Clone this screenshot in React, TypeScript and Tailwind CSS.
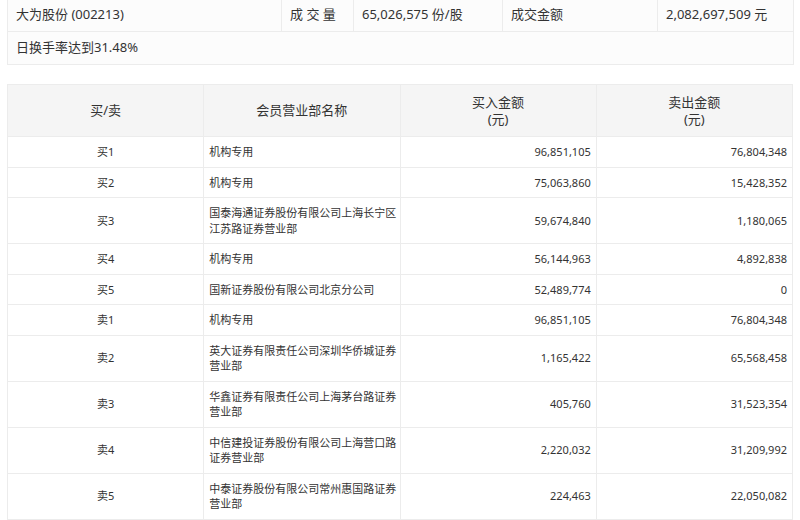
import React from 'react';

const rows = [
  { side: '买1', name: '机构专用', buy: '96,851,105', sell: '76,804,348' },
  { side: '买2', name: '机构专用', buy: '75,063,860', sell: '15,428,352' },
  { side: '买3', name: '国泰海通证券股份有限公司上海长宁区江苏路证券营业部', buy: '59,674,840', sell: '1,180,065' },
  { side: '买4', name: '机构专用', buy: '56,144,963', sell: '4,892,838' },
  { side: '买5', name: '国新证券股份有限公司北京分公司', buy: '52,489,774', sell: '0' },
  { side: '卖1', name: '机构专用', buy: '96,851,105', sell: '76,804,348' },
  { side: '卖2', name: '英大证券有限责任公司深圳华侨城证券营业部', buy: '1,165,422', sell: '65,568,458' },
  { side: '卖3', name: '华鑫证券有限责任公司上海茅台路证券营业部', buy: '405,760', sell: '31,523,354' },
  { side: '卖4', name: '中信建投证券股份有限公司上海营口路证券营业部', buy: '2,220,032', sell: '31,209,992' },
  { side: '卖5', name: '中泰证券股份有限公司常州惠国路证券营业部', buy: '224,463', sell: '22,050,082' },
];

const App: React.FC = () => {
  return (
    <div className="w-[800px] h-[520px] overflow-hidden bg-white px-[7px] text-[#333] font-['Noto_Sans','Noto_Sans_CJK_SC',sans-serif]">
      {/* Summary table */}
      <table className="-mt-[2px] w-[786px] table-fixed border-collapse text-[13px]">
        <colgroup>
          <col className="w-[274px]" />
          <col className="w-[72px]" />
          <col className="w-[149px]" />
          <col className="w-[155px]" />
          <col className="w-[136px]" />
        </colgroup>
        <tbody>
          <tr className="h-[33px] bg-[#fcfcfc]">
            <td className="border border-[#ececec] px-2">大为股份 (002213)</td>
            <td className="border border-[#ececec] px-2 whitespace-nowrap">成 交 量</td>
            <td className="border border-[#ececec] px-2 whitespace-nowrap">65,026,575 份/股</td>
            <td className="border border-[#ececec] px-2">成交金额</td>
            <td className="border border-[#ececec] px-2 whitespace-nowrap">2,082,697,509 元</td>
          </tr>
          <tr className="h-[33px] bg-[#fcfcfc]">
            <td colSpan={5} className="border border-[#ececec] px-2">日换手率达到31.48%</td>
          </tr>
        </tbody>
      </table>

      {/* Seats table */}
      <table className="mt-[19px] w-[786px] table-fixed border-collapse">
        <thead>
          <tr className="h-[52px] bg-[#f5f5f5] text-[13px] leading-[17px]">
            <th className="w-1/4 border border-[#ececec] font-normal">买/卖</th>
            <th className="w-1/4 border border-[#ececec] font-normal">会员营业部名称</th>
            <th className="w-1/4 border border-[#ececec] font-normal">买入金额<br />(元)</th>
            <th className="w-1/4 border border-[#ececec] font-normal">卖出金额<br />(元)</th>
          </tr>
        </thead>
        <tbody className="text-[11px] leading-[15.5px]">
          {rows.map((r) => (
            <tr key={r.side}>
              <td className="border border-[#ececec] py-[7px] text-center">{r.side}</td>
              <td className="border border-[#ececec] py-[7px] pl-[5px] pr-[3px] text-left">{r.name}</td>
              <td className="border border-[#ececec] py-[7px] px-[5px] text-right">{r.buy}</td>
              <td className="border border-[#ececec] py-[7px] px-[5px] text-right">{r.sell}</td>
            </tr>
          ))}
        </tbody>
      </table>
    </div>
  );
};

export default App;
